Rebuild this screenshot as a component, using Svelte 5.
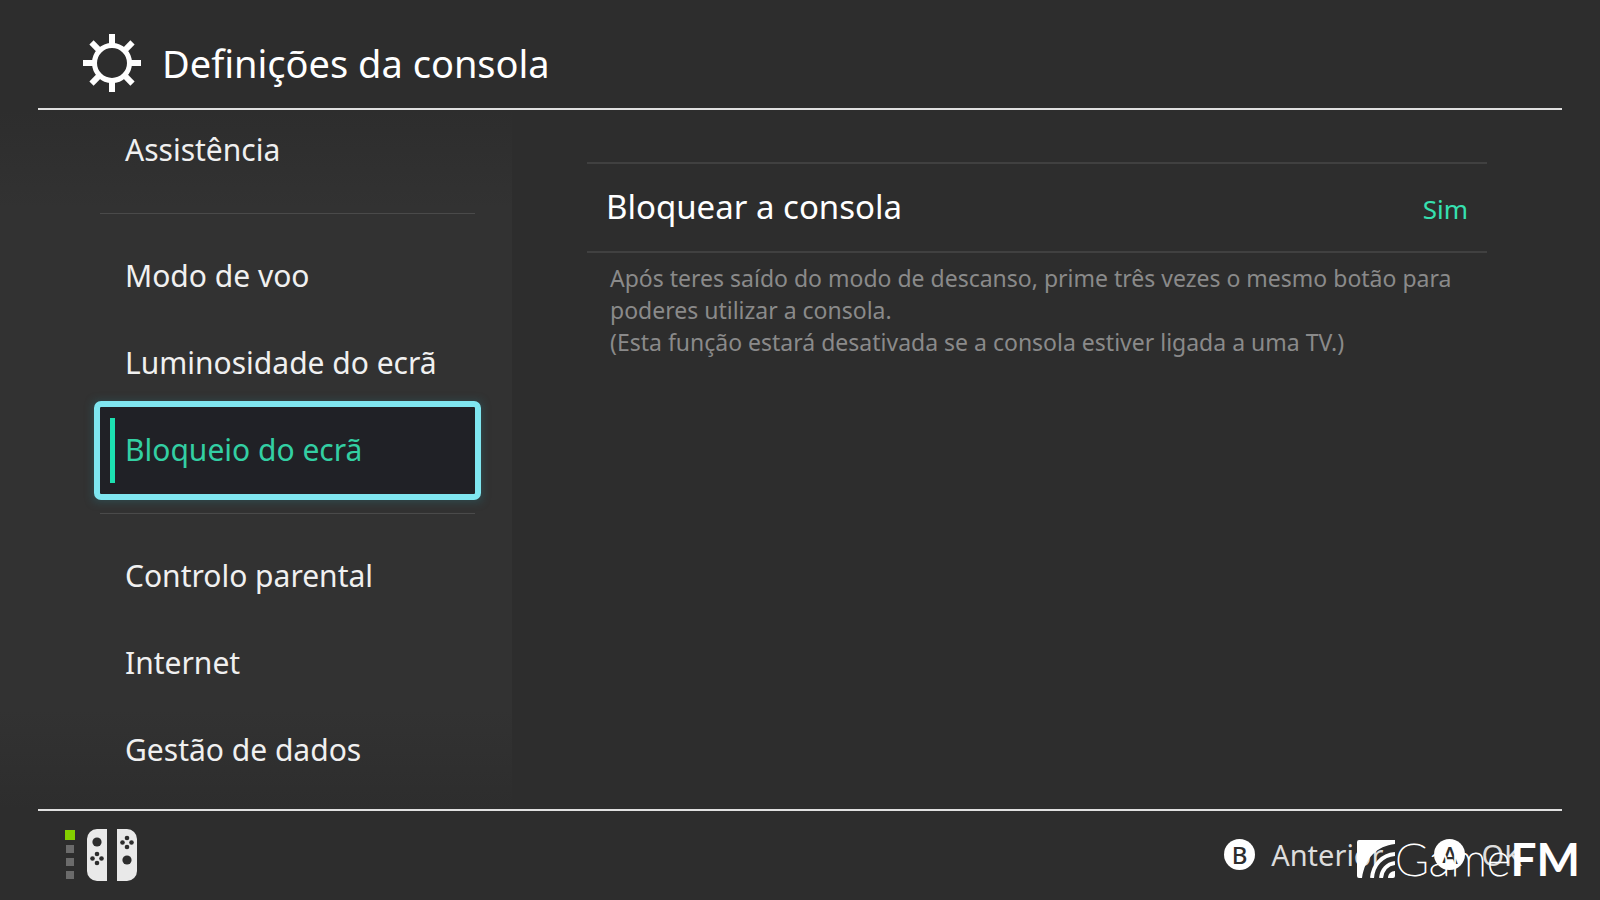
<script>
  const groups = [
    ['Assistência'],
    ['Modo de voo', 'Luminosidade do ecrã', 'Bloqueio do ecrã'],
    ['Controlo parental', 'Internet', 'Gestão de dados']
  ];
  let selected = $state('Bloqueio do ecrã');
  let locked = $state(true);
  const teeth = [0, 45, 90, 135, 180, 225, 270, 315];
</script>

<div class="screen">
  <header>
    <svg class="gear" viewBox="0 0 60 60" aria-hidden="true">
      <circle cx="30" cy="30" r="17.5" fill="none" stroke="#fff" stroke-width="5" />
      {#each teeth as angle}
        <rect x="27" y="1" width="6" height="11" fill="#fff" transform="rotate({angle} 30 30)" />
      {/each}
    </svg>
    <h1>Definições da consola</h1>
  </header>

  <div class="body">
    <nav aria-label="Definições da consola">
      {#each groups as group}
        <ul>
          {#each group as item}
            <li>
              <button class="item" class:selected={item === selected} onclick={() => (selected = item)}>
                <span>{item}</span>
              </button>
            </li>
          {/each}
        </ul>
      {/each}
    </nav>

    <main>
      <button class="option" aria-pressed={locked} onclick={() => (locked = !locked)}>
        <span>Bloquear a consola</span>
        <span class="value">{locked ? 'Sim' : 'Não'}</span>
      </button>
      <p>
        Após teres saído do modo de descanso, prime três vezes o mesmo botão para poderes utilizar a
        consola.<br />(Esta função estará desativada se a consola estiver ligada a uma TV.)
      </p>
    </main>
  </div>

  <footer>
    <div class="players">
      <div class="leds"><i class="on"></i><i></i><i></i><i></i></div>
      <svg class="pads" viewBox="0 0 50 52" aria-hidden="true">
        <path d="M20 0v52H10A10 10 0 0 1 0 42V10A10 10 0 0 1 10 0z" fill="#e9e9e9" />
        <path d="M30 0v52h10a10 10 0 0 0 10-10V10A10 10 0 0 0 40 0z" fill="#e9e9e9" />
        <g fill="#2d2d2d">
          <circle cx="10" cy="13" r="4.6" />
          <circle cx="10" cy="25" r="2.3" />
          <circle cx="10" cy="34" r="2.3" />
          <circle cx="5.5" cy="29.5" r="2.3" />
          <circle cx="14.5" cy="29.5" r="2.3" />
          <circle cx="40" cy="31" r="4.6" />
          <circle cx="40" cy="9" r="2.3" />
          <circle cx="40" cy="18" r="2.3" />
          <circle cx="35.5" cy="13.5" r="2.3" />
          <circle cx="44.5" cy="13.5" r="2.3" />
        </g>
      </svg>
    </div>
    <div class="hints">
      <button class="hint"><b>B</b>Anterior</button>
      <button class="hint"><b>A</b>OK</button>
    </div>
    <div class="brand">
      <svg viewBox="0 0 38 38" aria-hidden="true">
        <path d="M2 0H38V4C20 6 8 18 5 38H2A2 2 0 0 1 0 36V2A2 2 0 0 1 2 0z" fill="#fff" />
        <g fill="none" stroke="#fff" stroke-width="4">
          <path d="M15 38C16 25 25 15 38 14" />
          <path d="M24 38C25 30 30 24 38 23" />
        </g>
        <path d="M31 38C31 34 34 31 38 31V36A2 2 0 0 1 36 38z" fill="#fff" />
      </svg>
      <span>Game</span><strong>FM</strong>
    </div>
  </footer>
</div>

<style>
  :global(body) {
    margin: 0;
    background: #2d2d2d;
  }
  .screen {
    box-sizing: border-box;
    min-height: 100vh;
    display: flex;
    flex-direction: column;
    background: #2d2d2d;
    color: #fff;
    font-family: 'Noto Sans', sans-serif;
    overflow: hidden;
  }
  button {
    font: inherit;
    color: inherit;
    background: none;
    border: 0;
    padding: 0;
    text-align: left;
    cursor: pointer;
  }
  header {
    display: flex;
    align-items: center;
    gap: 20px;
    height: 90px;
    margin: 0 38px;
    padding: 18px 44px 0;
    border-bottom: 2px solid #e0e0e0;
  }
  .gear {
    width: 60px;
    height: 60px;
  }
  h1 {
    margin: 0;
    font-size: 38px;
    font-weight: 400;
    line-height: 48px;
  }
  .body {
    flex: 1;
    display: grid;
    grid-template-columns: 32fr 68fr;
  }
  nav {
    padding: 0 37px 0 100px;
    background: linear-gradient(#2d2d2d, #323232 14%, #323232 86%, #2d2d2d);
  }
  ul {
    list-style: none;
    margin: 0;
    padding: 0 0 19px;
  }
  ul:first-child {
    margin-top: -3px;
  }
  ul + ul {
    border-top: 1px solid #4a4a4a;
    padding-top: 19px;
  }
  ul:last-child {
    padding-bottom: 0;
  }
  .item {
    display: flex;
    align-items: center;
    width: 100%;
    height: 87px;
    padding: 0 10px;
    font-size: 30px;
    color: #f0f0f0;
  }
  .item span {
    box-sizing: border-box;
    display: flex;
    align-items: center;
    height: 65px;
    padding: 0 0 2px 10px;
    border-left: 5px solid transparent;
  }
  .item.selected {
    background: #202126;
    color: #33cfa3;
    border-radius: 1px;
    outline: 6px solid #7fe6f0;
    box-shadow: 0 1px 8px 7px #2a6f7866;
  }
  .item.selected span {
    border-color: #1ce0b0;
  }
  main {
    padding: 52px 113px 0 75px;
  }
  .option {
    display: flex;
    flex-wrap: wrap;
    align-items: baseline;
    align-content: center;
    justify-content: space-between;
    width: 100%;
    height: 91px;
    padding: 0 19px;
    border-top: 2px solid #404040;
    border-bottom: 2px solid #404040;
    font-size: 33px;
    line-height: 44px;
  }
  .value {
    font-size: 26px;
    color: #36e0b0;
  }
  p {
    margin: 9px 23px 0;
    font-size: 23px;
    line-height: 32px;
    color: #8a8a8a;
  }
  footer {
    position: relative;
    display: flex;
    align-items: center;
    justify-content: space-between;
    height: 87px;
    margin: 0 38px;
    padding: 0 40px 2px 27px;
    border-top: 2px solid #e0e0e0;
  }
  .players {
    display: flex;
    align-items: center;
    gap: 12px;
  }
  .leds {
    display: grid;
    justify-items: center;
    gap: 5px;
  }
  .leds i {
    width: 8px;
    height: 8px;
    background: #6b6b6b;
  }
  .leds .on {
    width: 10px;
    height: 10px;
    background: #84d000;
  }
  .pads {
    width: 50px;
    height: 52px;
  }
  .hints {
    display: flex;
    gap: 51px;
  }
  .hint {
    display: flex;
    align-items: center;
    gap: 16px;
    font-size: 29px;
    line-height: 40px;
    color: #dcdcdc;
  }
  .hint b {
    width: 31px;
    height: 31px;
    border-radius: 50%;
    background: #fff;
    color: #2d2d2d;
    font-size: 24px;
    font-weight: 500;
    line-height: 31px;
    text-align: center;
  }
  .brand {
    position: absolute;
    right: -18px;
    bottom: 22px;
    display: flex;
    align-items: center;
    height: 38px;
    font-family: Lato, sans-serif;
    font-size: 46px;
    line-height: 38px;
    pointer-events: none;
  }
  .brand svg {
    width: 38px;
    height: 38px;
  }
  .brand span {
    font-weight: 100;
    -webkit-text-stroke: 1px #fff;
  }
  .brand strong {
    font-weight: 700;
  }
</style>
